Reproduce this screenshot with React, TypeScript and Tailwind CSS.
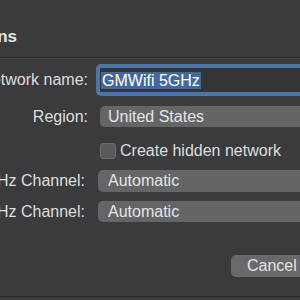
export default function App() {
  return (
    <div className="w-[300px] h-[300px] overflow-hidden bg-[#3b3b3d] text-[#dedede] font-['Liberation_Sans',Arial,sans-serif] text-[16px]">
      <div className="h-[57px] pt-[27px] flex justify-end w-[17px]">
        <h1 className="text-[17px] leading-[20px] font-bold whitespace-nowrap text-[#e6e6e6]">Wi-Fi Options</h1>
      </div>
      <div className="h-px bg-[#2c2c2e]" />
      <div className="h-px bg-[#444446]" />

      <div className="mt-[5px] flex items-center h-[32px]">
        <div className="w-[88px] shrink-0 flex justify-end">
          <span className="whitespace-nowrap">Network name:</span>
        </div>
        <div className="ml-[8px] w-[220px] shrink-0 h-[32px] rounded-[5px] border-[4px] border-[#4a77a8] bg-[#353537] flex items-center pl-[1px]">
          <span className="bg-[#45689a] text-white px-[1px] leading-[17px] whitespace-nowrap">GMWifi 5GHz</span>
        </div>
      </div>

      <div className="mt-[10px] flex items-center h-[21px]">
        <div className="w-[88px] shrink-0 flex justify-end">
          <span className="whitespace-nowrap">Region:</span>
        </div>
        <div className="ml-[12px] w-[220px] shrink-0 h-[21px] rounded-[5px] bg-[#656567] flex items-center pl-[8px] text-[#e4e4e4] whitespace-nowrap">
          United States
        </div>
      </div>

      <div className="mt-[16px] flex items-center h-[16px] pl-[100px]">
        <div className="w-[16px] h-[16px] shrink-0 rounded-[3px] bg-[#5a5a5c] border border-[#6a6a6c]" />
        <span className="ml-[4px] whitespace-nowrap">Create hidden network</span>
      </div>

      <div className="mt-[11px] flex items-center h-[22px]">
        <div className="w-[85px] shrink-0 flex justify-end">
          <span className="whitespace-nowrap">2.4 GHz Channel:</span>
        </div>
        <div className="ml-[13px] w-[220px] shrink-0 h-[22px] rounded-[5px] bg-[#656567] flex items-center pl-[10px] text-[#e4e4e4]">
          Automatic
        </div>
      </div>

      <div className="mt-[9px] flex items-center h-[21px]">
        <div className="w-[85px] shrink-0 flex justify-end">
          <span className="whitespace-nowrap">5 GHz Channel:</span>
        </div>
        <div className="ml-[13px] w-[220px] shrink-0 h-[21px] rounded-[5px] bg-[#656567] flex items-center pl-[10px] text-[#e4e4e4]">
          Automatic
        </div>
      </div>

      <div className="mt-[33px] flex h-[22px] pl-[231px]">
        <button className="w-[90px] shrink-0 h-[22px] rounded-[5px] bg-[#69696b] text-[#e4e4e4] text-left pl-[16px] leading-[22px]">
          Cancel
        </button>
      </div>

      <div className="mt-[19px] h-px bg-[#2a2a2c]" />
    </div>
  );
}
